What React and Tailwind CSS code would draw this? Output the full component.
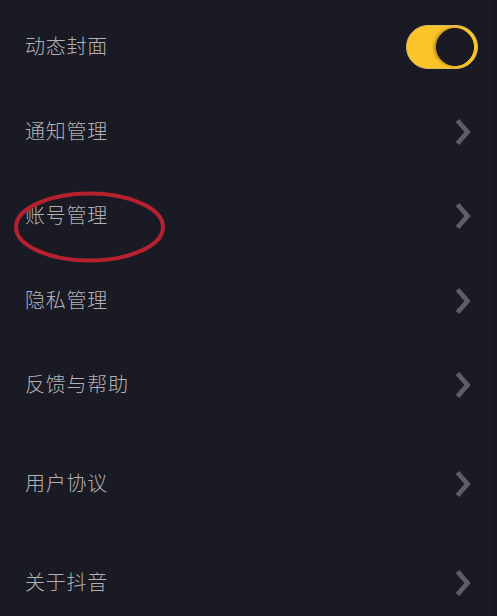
const rows = [
  { label: '动态封面', height: 'h-[85px]', toggle: true },
  { label: '通知管理', height: 'h-[85px]' },
  { label: '账号管理', height: 'h-[84px]' },
  { label: '隐私管理', height: 'h-[85px]' },
  { label: '反馈与帮助', height: 'h-[84px]' },
  { label: '用户协议', height: 'h-[114px]' },
  { label: '关于抖音', height: 'h-[84px]' },
];

function Chevron() {
  return (
    <svg className="w-[18px] h-[28px] mr-[25px]" viewBox="0 0 18 28" fill="none">
      <path d="M3.5 2.5L13.5 14L3.5 25.5" stroke="#5e5e68" strokeWidth="4.8" />
    </svg>
  );
}

function Toggle() {
  return (
    <div className="relative w-[72px] h-[44px] mr-[19px] rounded-full bg-[#fbc52a] border border-[#d8b860]">
      <div className="absolute right-[3px] top-[2px] w-[38px] h-[38px] rounded-full bg-[#1a1a24] border border-[#14120f] shadow-[-2px_0_3px_rgba(90,60,0,0.45)]" />
    </div>
  );
}

export default function App() {
  return (
    <div className="relative w-[497px] h-[616px] overflow-hidden pt-[4px] bg-[#1a1a24] text-[#b2b2b4] font-['Noto_Sans_CJK_SC',sans-serif]">
      {rows.map((row) => (
        <div key={row.label} className={`${row.height} flex items-center justify-between pl-[25px]`}>
          <span className="text-[20px] font-light tracking-[0.75px] pb-[2px]">{row.label}</span>
          {row.toggle ? <Toggle /> : <Chevron />}
        </div>
      ))}

      {/* red marker circle drawn over the screenshot */}
      <svg className="absolute left-[12px] top-[190px] w-[156px] h-[74px]" viewBox="0 0 156 74" fill="none">
        <ellipse cx="77.5" cy="37" rx="73.5" ry="33.5" stroke="#b5212e" strokeWidth="4" />
      </svg>

      <div className="absolute right-0 top-0 w-[5px] h-full bg-[#17171f]" />
    </div>
  );
}
